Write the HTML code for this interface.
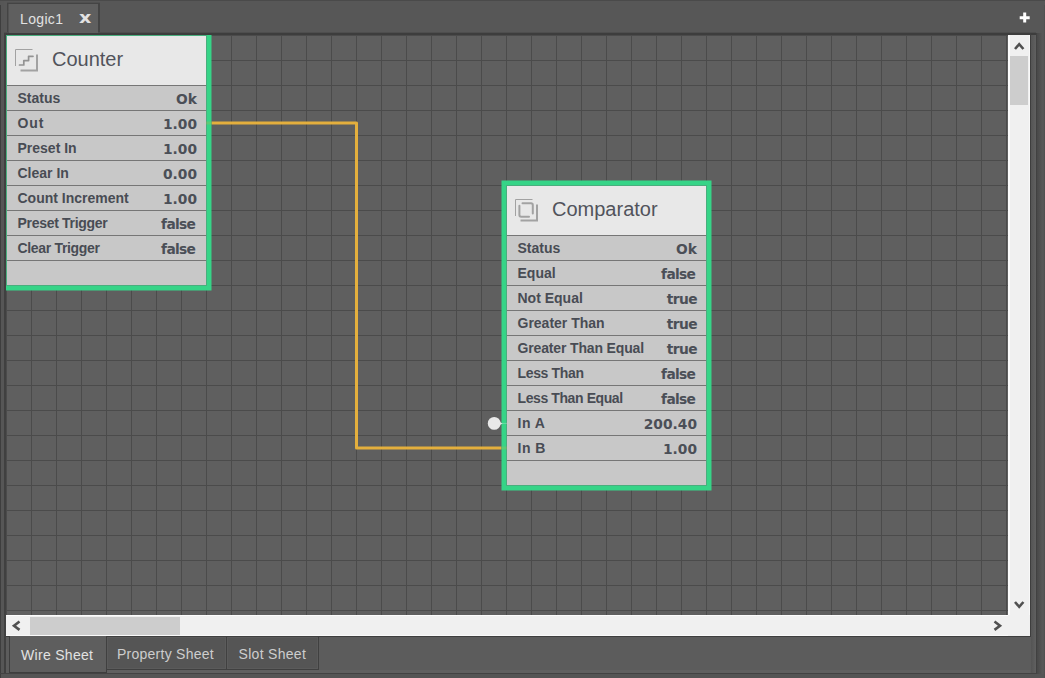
<!DOCTYPE html>
<html><head><meta charset="utf-8"><title>Logic1</title>
<style>
html,body{margin:0;padding:0;}
body{width:1045px;height:678px;overflow:hidden;background:#555555;font-family:"Liberation Sans",sans-serif;position:relative;}
.abs{position:absolute;}
#panel{left:1px;top:1px;width:1035px;height:672px;background:#575757;}
#canvas{left:6px;top:35px;width:1002px;height:580px;overflow:hidden;background-color:#5f5f5f;
 background-image:linear-gradient(to right,#4b4b4b 1px,transparent 1px),linear-gradient(to bottom,#4b4b4b 1px,transparent 1px);
 background-size:25px 25px;}
.lbl{position:absolute;font-weight:bold;font-size:14px;line-height:16px;color:#484c54;white-space:nowrap;}
.val{position:absolute;font-family:"DejaVu Sans",sans-serif;font-weight:bold;font-size:13.8px;line-height:16px;color:#4b4f57;white-space:nowrap;text-align:right;}
.ttl{position:absolute;font-size:20px;line-height:24px;color:#51535b;white-space:nowrap;}
.tab{position:absolute;font-size:14px;line-height:16px;white-space:nowrap;}
</style></head><body>
<div id="panel" class="abs"></div>
<!-- top edge -->
<div class="abs" style="left:0;top:0;width:1045px;height:1px;background:#4a4a4a"></div>
<!-- left frame -->
<div class="abs" style="left:0;top:5px;width:1px;height:673px;background:#3e3e3e"></div>
<div class="abs" style="left:1px;top:1px;width:3px;height:672px;background:#565656"></div>
<!-- top tab -->
<div class="abs" style="left:7px;top:2px;width:93px;height:1px;background:#505050"></div>
<div class="abs" style="left:7px;top:3px;width:93px;height:31px;background:#444"></div>
<div class="abs" style="left:8px;top:4px;width:1px;height:29px;background:#525252"></div>
<div class="abs" style="left:9px;top:4px;width:89px;height:30px;background:#5f5f5f"></div>
<div class="tab" style="left:20px;top:11px;color:#e2e2e2;letter-spacing:0.35px">Logic1</div>
<div class="tab" id="closex" style="left:78.8px;top:8px;font-family:'DejaVu Sans',sans-serif;font-weight:bold;font-size:16.5px;line-height:20px;color:#e2e2e2;transform:scaleX(1.16);transform-origin:0 0">x</div>
<!-- plus -->
<svg class="abs" style="left:1019px;top:12px" width="12" height="12"><path d="M0.7 5.7H10.7M5.7 0.6V10.6" stroke="#fff" stroke-width="3" fill="none"/></svg>
<!-- border above canvas -->
<div class="abs" style="left:4px;top:32px;width:1033px;height:1px;background:#4e4e4e"></div>
<div class="abs" style="left:4px;top:33px;width:1033px;height:2px;background:#3d3d3d"></div>
<div class="abs" style="left:9px;top:32px;width:89px;height:1px;background:#5f5f5f"></div>
<!-- left dark -->
<div class="abs" style="left:4px;top:33px;width:2px;height:640px;background:#404040"></div>
<!-- right band -->
<div class="abs" style="left:1030px;top:33px;width:1px;height:604px;background:#3e3e3e"></div>
<div class="abs" style="left:1030px;top:637px;width:1px;height:36px;background:#5c5c5c"></div>
<div class="abs" style="left:1031px;top:35px;width:5px;height:638px;background:linear-gradient(to right,#545454,#606060)"></div>
<div class="abs" style="left:1036px;top:33px;width:1px;height:641px;background:#414141"></div>
<div class="abs" style="left:1036px;top:1px;width:9px;height:32px;background:#575757"></div>
<div class="abs" style="left:1037px;top:33px;width:6px;height:645px;background:linear-gradient(to right,#484848,#595959)"></div>
<div class="abs" style="left:1043px;top:5px;width:2px;height:673px;background:linear-gradient(to right,#595959,#4e4e4e)"></div>

<div id="canvas" class="abs">
<svg class="abs" style="left:0;top:0" width="1003" height="580" viewBox="6 35 1003 580">
 <!-- wire -->
 <path d="M211.5 123H356.5V448H501.5" stroke="#e4af3d" stroke-width="3" fill="none" stroke-linejoin="round"/>
 <!-- counter -->
 <rect x="1.5" y="30.5" width="210" height="260" fill="#36d487"/>
 <rect x="6.5" y="35.5" width="200" height="250" fill="none" stroke="#49ae7e" stroke-width="1"/>
 <rect x="7" y="36" width="199" height="249" fill="#c8c8c8"/>
 <rect x="7" y="36" width="199" height="49" fill="#e8e8e8"/>
 <g fill="#767676">
 <rect x="7" y="85" width="199" height="1"/><rect x="7" y="110" width="199" height="1"/><rect x="7" y="135" width="199" height="1"/><rect x="7" y="160" width="199" height="1"/><rect x="7" y="185" width="199" height="1"/><rect x="7" y="210" width="199" height="1"/><rect x="7" y="235" width="199" height="1"/><rect x="7" y="260" width="199" height="1"/>
 </g>
 <!-- counter icon -->
 <g fill="none" stroke="#a2a2a2">
  <path d="M15.5 66V49.5H32.5" stroke-width="1"/>
  <path d="M37 54.5V70.5H20.5" stroke-width="2"/>
  <path d="M19.5 65H23.8V60.6H28.6V56.3H33" stroke="#939393" stroke-width="1.7" stroke-linejoin="round" stroke-linecap="round"/>
 </g>
 <!-- comparator -->
 <rect x="501.5" y="180.5" width="210" height="310" fill="#36d487"/>
 <rect x="506.5" y="185.5" width="200" height="300" fill="none" stroke="#49ae7e" stroke-width="1"/>
 <rect x="507" y="186" width="199" height="299" fill="#c8c8c8"/>
 <rect x="507" y="186" width="199" height="49" fill="#e8e8e8"/>
 <g fill="#767676">
 <rect x="507" y="235" width="199" height="1"/><rect x="507" y="260" width="199" height="1"/><rect x="507" y="285" width="199" height="1"/><rect x="507" y="310" width="199" height="1"/><rect x="507" y="335" width="199" height="1"/><rect x="507" y="360" width="199" height="1"/><rect x="507" y="385" width="199" height="1"/><rect x="507" y="410" width="199" height="1"/><rect x="507" y="435" width="199" height="1"/><rect x="507" y="460" width="199" height="1"/>
 </g>
 <!-- comparator icon -->
 <g fill="none" stroke="#a2a2a2">
  <path d="M515.5 216V199.5H532.5" stroke-width="1"/>
  <path d="M537 204.5V220.5H520.5" stroke-width="2"/>
  <path d="M522.5 203.3H531A1.8 1.8 0 0 1 532.8 205.1V213.5" stroke-width="2" stroke-linecap="round"/>
  <path d="M519.4 205.8V215A1.8 1.8 0 0 0 521.2 216.8H529" stroke-width="2" stroke-linecap="round"/>
 </g>
 <!-- input knob -->
 <circle cx="494.2" cy="423.4" r="6.4" fill="#e9e9e9"/>
 <path d="M499 421.4L502.5 423.4L499 425.4Z" fill="#e9e9e9"/>
 <rect x="501.5" y="422.9" width="5.5" height="1" fill="#e9e9e9" opacity="0.3"/>
 <rect x="501.5" y="446.5" width="5.5" height="3" fill="#e4af3d" opacity="0.22"/>
 <rect x="206" y="121.5" width="5.5" height="3" fill="#e4af3d" opacity="0.22"/>
</svg>

<!-- Counter text (canvas coords = screen - (6,35)) -->
<div class="ttl" style="left:46px;top:12px">Counter</div>
<div class="lbl" style="left:11.5px;top:55px">Status</div><div class="val" style="right:811px;top:56px">Ok</div>
<div class="lbl" style="left:11.5px;top:80px;letter-spacing:0.9px">Out</div><div class="val" style="right:811px;top:81px">1.00</div>
<div class="lbl" style="left:11.5px;top:105px">Preset In</div><div class="val" style="right:811px;top:106px">1.00</div>
<div class="lbl" style="left:11.5px;top:130px">Clear In</div><div class="val" style="right:811px;top:131px">0.00</div>
<div class="lbl" style="left:11.5px;top:155px">Count Increment</div><div class="val" style="right:811px;top:156px">1.00</div>
<div class="lbl" style="left:11.5px;top:180px;letter-spacing:-0.3px">Preset Trigger</div><div class="val" style="right:812.8px;top:181px;letter-spacing:-0.7px">false</div>
<div class="lbl" style="left:11.5px;top:205px;letter-spacing:-0.33px">Clear Trigger</div><div class="val" style="right:812.8px;top:206px;letter-spacing:-0.7px">false</div>

<!-- Comparator text -->
<div class="ttl" style="left:546px;top:162px">Comparator</div>
<div class="lbl" style="left:511.5px;top:205px">Status</div><div class="val" style="right:311px;top:206px">Ok</div>
<div class="lbl" style="left:511.5px;top:230px">Equal</div><div class="val" style="right:312.8px;top:231px;letter-spacing:-0.7px">false</div>
<div class="lbl" style="left:511.5px;top:255px">Not Equal</div><div class="val" style="right:311px;top:256px;letter-spacing:-0.6px">true</div>
<div class="lbl" style="left:511.5px;top:280px">Greater Than</div><div class="val" style="right:311px;top:281px;letter-spacing:-0.6px">true</div>
<div class="lbl" style="left:511.5px;top:305px;letter-spacing:-0.15px">Greater Than Equal</div><div class="val" style="right:311px;top:306px;letter-spacing:-0.6px">true</div>
<div class="lbl" style="left:511.5px;top:330px;letter-spacing:-0.35px">Less Than</div><div class="val" style="right:312.8px;top:331px;letter-spacing:-0.7px">false</div>
<div class="lbl" style="left:511.5px;top:355px;letter-spacing:-0.4px">Less Than Equal</div><div class="val" style="right:312.8px;top:356px;letter-spacing:-0.7px">false</div>
<div class="lbl" style="left:511.5px;top:380px;letter-spacing:0.5px">In A</div><div class="val" style="right:311px;top:381px">200.40</div>
<div class="lbl" style="left:511.5px;top:405px;letter-spacing:0.5px">In B</div><div class="val" style="right:311px;top:406px">1.00</div>
</div>

<!-- vertical scrollbar -->
<div class="abs" style="left:1008px;top:35px;width:22px;height:601px;background:#f0f0f0"></div>
<div class="abs" style="left:1008px;top:35px;width:22px;height:580px;box-shadow:inset 2px 0 0 #fcfcfc,inset -1px 0 0 #f8f8f8"></div>
<div class="abs" style="left:1010px;top:56px;width:18px;height:49px;background:#cdcdcd"></div>
<svg class="abs" style="left:1009px;top:35px" width="21" height="21"><path d="M6 14L10.2 9.2L14.4 14" stroke="#505050" stroke-width="2.6" fill="none"/></svg>
<svg class="abs" style="left:1009px;top:594px" width="21" height="21"><path d="M6 8L10.2 12.8L14.4 8" stroke="#505050" stroke-width="2.6" fill="none"/></svg>
<!-- horizontal scrollbar -->
<div class="abs" style="left:6px;top:615px;width:1002px;height:21px;background:#f0f0f0;box-shadow:inset 0 1px 0 #fcfcfc,inset 0 -1px 0 #fafafa"></div>
<div class="abs" style="left:30px;top:617px;width:150px;height:18px;background:#cdcdcd"></div>
<svg class="abs" style="left:6px;top:615px" width="21" height="21"><path d="M13.5 6.5L8 10.7L13.5 14.9" stroke="#505050" stroke-width="2.6" fill="none"/></svg>
<svg class="abs" style="left:987px;top:615px" width="21" height="21"><path d="M7.5 6.5L13 10.7L7.5 14.9" stroke="#505050" stroke-width="2.6" fill="none"/></svg>

<!-- bottom tabs -->
<div class="abs" style="left:6px;top:636px;width:1024px;height:37px;background:#5c5c5c"></div>
<div class="abs" style="left:6px;top:636px;width:1024px;height:1px;background:#3e3e3e"></div>
<div class="abs" style="left:9px;top:636px;width:98px;height:37px;background:#3e3e3e"></div>
<div class="abs" style="left:10px;top:636px;width:96px;height:36px;background:#5e5e5e"></div>
<div class="tab" style="left:21px;top:647px;color:#e2e2e2;letter-spacing:0.3px">Wire Sheet</div>
<div class="abs" style="left:106px;top:636px;width:213px;height:34px;background:#404040"></div>
<div class="abs" style="left:107px;top:637px;width:119px;height:32px;background:#555;box-shadow:inset 1px 1px 0 #5b5b5b,inset -1px -1px 0 #5b5b5b"></div>
<div class="abs" style="left:227px;top:637px;width:91px;height:32px;background:#555;box-shadow:inset 1px 1px 0 #5b5b5b,inset -1px -1px 0 #5b5b5b"></div>
<div class="tab" style="left:117px;top:646px;color:#cdcdcd;letter-spacing:0.25px">Property Sheet</div>
<div class="tab" style="left:238.5px;top:646px;color:#cdcdcd;letter-spacing:0.3px">Slot Sheet</div>
<div class="abs" style="left:107px;top:670px;width:923px;height:3px;background:#606060"></div>
<!-- bottom edge -->
<div class="abs" style="left:0;top:673px;width:1037px;height:1px;background:#434343"></div>
<div class="abs" style="left:1px;top:674px;width:1043px;height:4px;background:#555"></div>
</body></html>
